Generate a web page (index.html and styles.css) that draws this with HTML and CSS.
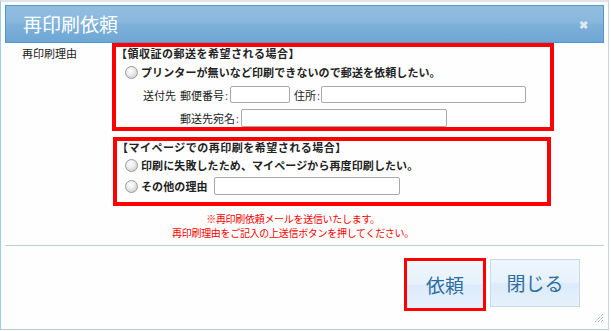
FILE: index.html
```html
<!DOCTYPE html>
<html lang="ja">
<head>
<meta charset="utf-8">
<title>再印刷依頼</title>
<link rel="stylesheet" href="styles.css">
</head>
<body>
<div class="dialog">
  <div class="titlebar">
    <span class="title">再印刷依頼</span>
    <span class="close">✖</span>
  </div>
  <div class="content">
    <div class="form">
      <div class="label">再印刷理由</div>
      <div class="options">
        <div class="box box1">
          <div class="heading">【領収証の郵送を希望される場合】</div>
          <div class="radio-row r1">
            <input type="radio" name="reason" class="radio">
            <span class="bold">プリンターが無いなど印刷できないので郵送を依頼したい。</span>
          </div>
          <div class="addr-row row3">
            <span class="dest">送付先</span>
            <span class="fl">郵便番号<span class="colon">:</span></span>
            <input type="text" class="field zip">
            <span class="fl2">住所<span class="colon">:</span></span>
            <input type="text" class="field addr">
          </div>
          <div class="addr-row row4">
            <span class="fl3">郵送先宛名<span class="colon">:</span></span>
            <input type="text" class="field name">
          </div>
        </div>
        <div class="box box2">
          <div class="heading">【マイページでの再印刷を希望される場合】</div>
          <div class="radio-row r2">
            <input type="radio" name="reason" class="radio">
            <span class="bold">印刷に失敗したため、マイページから再度印刷したい。</span>
          </div>
          <div class="radio-row r3">
            <input type="radio" name="reason" class="radio">
            <span class="bold">その他の理由</span>
            <input type="text" class="field other">
          </div>
        </div>
      </div>
    </div>
    <div class="notice">
      <div class="nline">※再印刷依頼メールを送信いたします。</div>
      <div class="nline">再印刷理由をご記入の上送信ボタンを押してください。</div>
    </div>
  </div>
  <div class="buttonpane">
    <button class="btn btn-primary">依頼</button>
    <button class="btn btn-close">閉じる</button>
  </div>
  <svg class="grip" width="10" height="10" viewBox="0 0 10 10">
    <path d="M9 1 L1 9 M9 4 L4 9 M9 7 L7 9" stroke="#5c9ccc" stroke-width="1" stroke-dasharray="1 1" fill="none"/>
  </svg>
</div>
</body>
</html>
```

FILE: styles.css
```css
html, body {
  margin: 0;
  padding: 0;
  background: #fff;
}

body {
  font-family: "Noto Sans CJK JP", "Noto Sans", sans-serif;
  color: #222;
}

.dialog {
  position: relative;
  box-sizing: border-box;
  width: 609px;
  height: 330px;
  border-style: solid;
  border-width: 2px 1px 1px 1px;
  border-color: #dfe4e8 #c8d3dc #b9c9d6 #9ecbea;
  padding: 3px 4px 0 4px;
  background: #fefefe;
}

.titlebar {
  box-sizing: border-box;
  height: 38px;
  border: 1px solid #4f97d3;
  background: linear-gradient(#92bedf 0%, #8ab8dd 45%, #7db0d9 52%, #6ea7d4 100%);
  display: flex;
  align-items: center;
  justify-content: space-between;
  padding: 0 15px 0 17px;
}

.title {
  color: #fff;
  font-size: 19px;
  line-height: 22px;
}

.close {
  color: #dfe9f2;
  font-size: 11px;
  line-height: 11px;
  font-weight: bold;
}

.form {
  display: flex;
}

.label {
  width: 90px;
  padding: 4px 0 0 17px;
  font-size: 11px;
  line-height: 12px;
}

.options {
  display: flex;
  flex-direction: column;
}

.box {
  box-sizing: border-box;
  border: 4px solid #f00;
  font-size: 11px;
}

.box1 {
  width: 442px;
  height: 88px;
}

.box2 {
  width: 438px;
  height: 69px;
  margin: 6px 0 0 1px;
}

.heading {
  font-weight: bold;
  line-height: 12px;
  height: 12px;
  letter-spacing: 0.5px;
}

.bold {
  font-weight: bold;
  letter-spacing: 0.1px;
}

.radio-row {
  display: flex;
  align-items: center;
  line-height: 12px;
}

.radio {
  appearance: none;
  -webkit-appearance: none;
  box-sizing: border-box;
  width: 13px;
  height: 13px;
  margin: 0 3px 0 0;
  border-radius: 50%;
  border: 1px solid #9a9a9a;
  background: radial-gradient(circle at 40% 35%, #ffffff 0%, #ececec 40%, #c4c4c4 100%);
}

.r1 {
  height: 26px;
  padding-left: 9px;
}

.r2 {
  height: 24px;
  padding-left: 8px;
}

.r3 {
  height: 18px;
  padding-left: 8px;
}

.addr-row {
  display: flex;
  align-items: center;
  line-height: 12px;
}

.row3 {
  height: 17px;
  margin-top: 1px;
}

.row4 {
  height: 18px;
  margin-top: 6px;
}

.dest {
  margin-left: 27px;
}

.fl {
  margin-left: 4px;
}

.fl2 {
  margin-left: 4px;
}

.fl3 {
  margin-left: 64px;
}

.colon {
  color: #939;
  margin-left: 1px;
}

.field {
  box-sizing: border-box;
  margin: 0;
  padding: 0;
  border: 1px solid #a9a9a9;
  border-radius: 2px;
  background: #fff;
  font: inherit;
}

.zip {
  width: 60px;
  height: 17px;
  margin-left: 2px;
}

.addr {
  width: 205px;
  height: 17px;
  margin-left: 1px;
}

.name {
  width: 206px;
  height: 18px;
  margin-left: 2px;
}

.other {
  width: 186px;
  height: 18px;
  margin-left: 6px;
}

.notice {
  margin-top: 6px;
  padding-right: 23px;
  text-align: center;
  color: #f00;
  font-size: 10px;
  letter-spacing: -0.3px;
}

.nline {
  height: 14px;
  line-height: 14px;
}

.buttonpane {
  margin-top: 5px;
  border-top: 1px solid #b7cfe2;
  padding: 12px 24px 0 0;
  display: flex;
  justify-content: flex-end;
  align-items: flex-start;
  gap: 4px;
}

.btn {
  box-sizing: border-box;
  margin: 0;
  padding: 0;
  font-family: "Noto Sans CJK JP", "Noto Sans", sans-serif;
  font-size: 19px;
  line-height: 22px;
  color: #2e6e9e;
  border: 1px solid #c5dbec;
  background: linear-gradient(#eef6fe 0%, #e7f2fc 48%, #dceafa 52%, #e6f1fc 100%);
}

.btn-primary {
  width: 82px;
  height: 53px;
  border: 3px solid #f00;
}

.btn-close {
  width: 90px;
  height: 48px;
  margin-top: 1px;
}

.grip {
  position: absolute;
  right: 4px;
  bottom: 6px;
}
```
